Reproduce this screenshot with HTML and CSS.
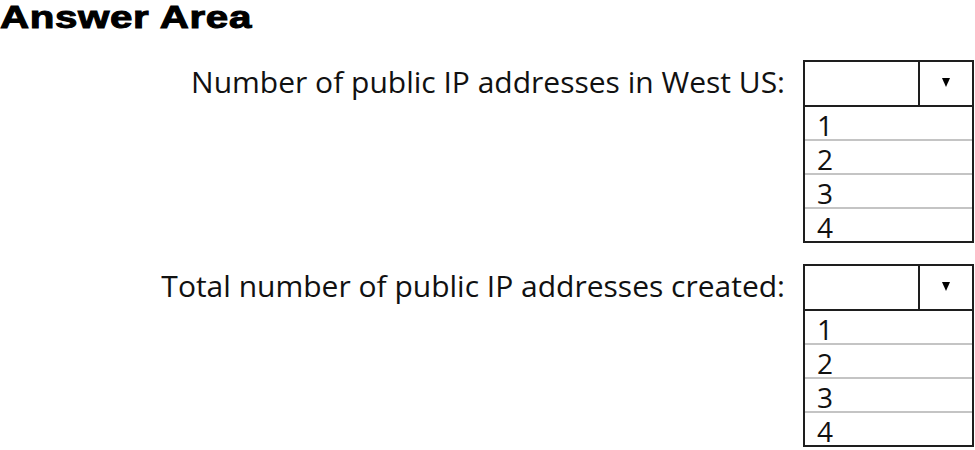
FILE: index.html
```html
<!DOCTYPE html>
<html lang="en">
<head>
<meta charset="utf-8">
<title>Answer Area</title>
<link rel="stylesheet" href="styles.css">
</head>
<body>
<h1 class="title"><span class="title-text">Answer Area</span></h1>
<div class="rows">
  <div class="row">
    <span class="label">Number of public IP addresses in West US:</span>
    <div class="dropdown">
      <div class="select"><span class="value"></span><span class="arrow"></span></div>
      <ul class="options">
        <li>1</li>
        <li>2</li>
        <li>3</li>
        <li>4</li>
      </ul>
    </div>
  </div>
  <div class="row">
    <span class="label">Total number of public IP addresses created:</span>
    <div class="dropdown">
      <div class="select"><span class="value"></span><span class="arrow"></span></div>
      <ul class="options">
        <li>1</li>
        <li>2</li>
        <li>3</li>
        <li>4</li>
      </ul>
    </div>
  </div>
</div>
</body>
</html>
```

FILE: styles.css
```css
html, body {
  margin: 0;
  padding: 0;
  background: #ffffff;
}

body {
  width: 975px;
  height: 450px;
  overflow: hidden;
  color: #111111;
  font-family: "Open Sans", "Noto Sans", sans-serif;
}

.title {
  margin: 0;
  height: 30px;
  font-family: "Liberation Sans", Arial, sans-serif;
  font-weight: bold;
  font-size: 32px;
  line-height: 34px;
  color: #000000;
  overflow: visible;
}

.title-text {
  display: inline-block;
  margin-top: -7px;
  transform: scaleX(1.26);
  transform-origin: left center;
  -webkit-text-stroke: 1px #000000;
  letter-spacing: 0.5px;
}

.rows {
  margin-top: 30px;
  display: flex;
  flex-direction: column;
  gap: 21px;
}

.row {
  display: flex;
  justify-content: flex-end;
  align-items: flex-start;
  gap: 18px;
  padding-right: 1px;
}

.label {
  font-size: 30px;
  line-height: 43px;
  white-space: nowrap;
}

.dropdown {
  width: 171px;
  flex: none;
}

.select {
  display: flex;
  height: 47px;
  box-sizing: border-box;
  border: 2px solid #1e1e1e;
}

.value {
  width: 113px;
  border-right: 2px solid #1e1e1e;
}

.arrow {
  flex: 1;
  display: flex;
  align-items: center;
  justify-content: center;
  padding-bottom: 3px;
}

.arrow::before {
  content: "";
  width: 0;
  height: 0;
  border-left: 4.5px solid transparent;
  border-right: 4.5px solid transparent;
  border-top: 9px solid #000000;
}

.options {
  list-style: none;
  margin: 0;
  padding: 0;
  border: 2px solid #1e1e1e;
  border-top: none;
}

.options li {
  height: 28px;
  padding-top: 4px;
  line-height: 28px;
  padding-left: 12px;
  font-size: 28px;
  border-bottom: 2px solid #c4c4c4;
}

.options li:last-child {
  border-bottom: none;
}
```
